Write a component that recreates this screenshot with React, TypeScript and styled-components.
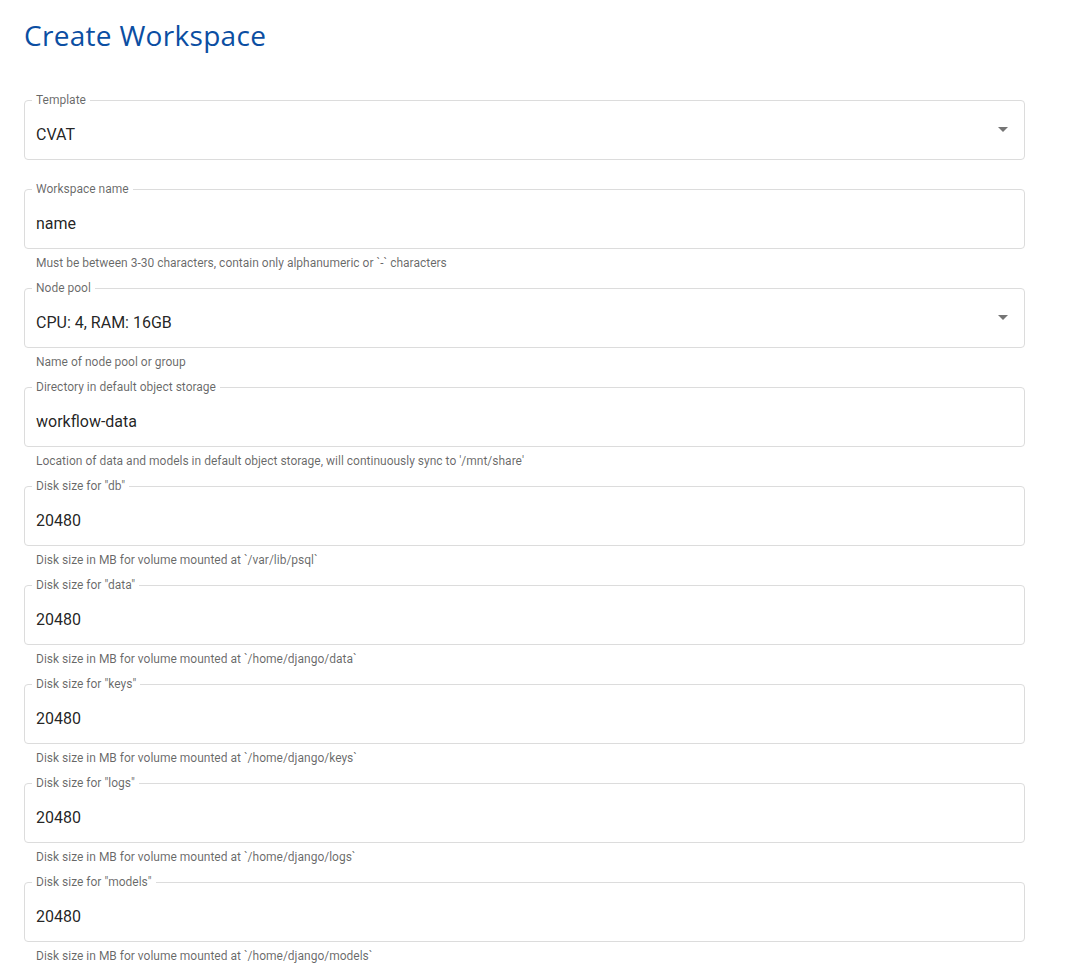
import React from "react";
import styled, { createGlobalStyle } from "styled-components";

const Global = createGlobalStyle`
  html, body { margin: 0; padding: 0; background: #fff; }
  body { font-family: Roboto, "Liberation Sans", sans-serif; }
`;

const Page = styled.main`
  padding: 16px 24px 0 24px;
  width: 1001px;
`;

const Title = styled.h1`
  margin: 0 0 39px 0;
  font-family: "Open Sans", "Liberation Sans", sans-serif;
  font-weight: 400;
  font-size: 28px;
  line-height: 38px;
  color: #0b4ea2;
  letter-spacing: 0.3px;
`;

const Form = styled.form`
  display: flex;
  flex-direction: column;
`;

const Group = styled.div<{ $helper: boolean }>`
  display: flex;
  flex-direction: column;
  margin-bottom: ${(p) => (p.$helper ? 8 : 22)}px;
`;

const Box = styled.fieldset`
  margin: 0;
  padding: 0 12px 0 11px;
  border: 1px solid #dcdcdc;
  border-radius: 4px;
  min-width: 0;
`;

const Legend = styled.legend`
  font-size: 12px;
  line-height: 14px;
  color: rgba(0, 0, 0, 0.6);
  padding: 0 4px;
  margin-left: -4px;
`;

const Row = styled.div`
  height: 52px;
  display: flex;
  align-items: center;
`;

const Value = styled.div`
  flex: 1;
  font-size: 16px;
  line-height: 20px;
  color: rgba(0, 0, 0, 0.87);
  margin-top: 4px;
`;

const Arrow = styled.svg`
  width: 24px;
  height: 24px;
  fill: #757575;
  margin-right: -3px;
  margin-top: -8px;
`;

const Helper = styled.p`
  margin: 4px 0 0 12px;
  font-size: 12px;
  line-height: 20px;
  color: rgba(0, 0, 0, 0.6);
`;

type FieldProps = { label: string; value: string; helper?: string; select?: boolean };

const Field = ({ label, value, helper, select }: FieldProps) => (
  <Group $helper={!!helper}>
    <Box>
      <Legend>{label}</Legend>
      <Row>
        <Value>{value}</Value>
        {select && (
          <Arrow viewBox="0 0 24 24">
            <path d="M7 10l5 5 5-5z" />
          </Arrow>
        )}
      </Row>
    </Box>
    {helper && <Helper>{helper}</Helper>}
  </Group>
);

const fields: FieldProps[] = [
  { label: "Template", value: "CVAT", select: true },
  {
    label: "Workspace name",
    value: "name",
    helper: "Must be between 3-30 characters, contain only alphanumeric or `-` characters",
  },
  { label: "Node pool", value: "CPU: 4, RAM: 16GB", helper: "Name of node pool or group", select: true },
  {
    label: "Directory in default object storage",
    value: "workflow-data",
    helper: "Location of data and models in default object storage, will continuously sync to '/mnt/share'",
  },
  { label: 'Disk size for "db"', value: "20480", helper: "Disk size in MB for volume mounted at `/var/lib/psql`" },
  { label: 'Disk size for "data"', value: "20480", helper: "Disk size in MB for volume mounted at `/home/django/data`" },
  { label: 'Disk size for "keys"', value: "20480", helper: "Disk size in MB for volume mounted at `/home/django/keys`" },
  { label: 'Disk size for "logs"', value: "20480", helper: "Disk size in MB for volume mounted at `/home/django/logs`" },
  {
    label: 'Disk size for "models"',
    value: "20480",
    helper: "Disk size in MB for volume mounted at `/home/django/models`",
  },
];

export default function App() {
  return (
    <>
      <Global />
      <Page>
        <Title>Create Workspace</Title>
        <Form>
          {fields.map((f) => (
            <Field key={f.label} {...f} />
          ))}
        </Form>
      </Page>
    </>
  );
}
